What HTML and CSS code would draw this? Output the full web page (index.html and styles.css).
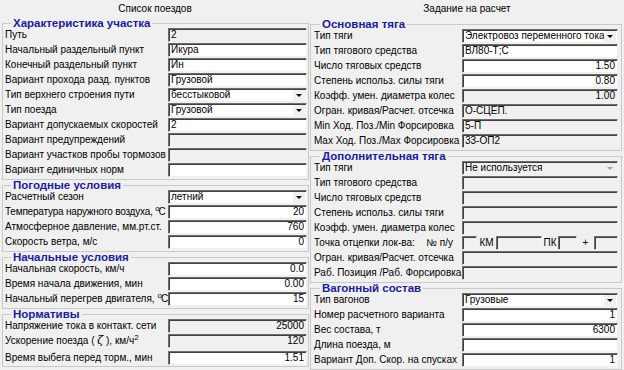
FILE: index.html
```html
<!DOCTYPE html>
<html lang="ru">
<head>
    <meta charset="UTF-8">
    <title>Список поездов - Задание на расчет</title>
    <link rel="stylesheet" href="styles.css">
</head>
<body>
<div class="app">
    <section class="panel panel-left">
        <div class="panel-head">Список поездов</div>

        <fieldset class="group">
            <legend>Характеристика участка</legend>
            <div class="row"><span class="lbl">Путь</span><span class="fld ro">2</span></div>
            <div class="row"><span class="lbl">Начальный раздельный пункт</span><span class="fld">Икура</span></div>
            <div class="row"><span class="lbl">Конечный раздельный пункт</span><span class="fld">Ин</span></div>
            <div class="row"><span class="lbl">Вариант прохода разд. пунктов</span><span class="fld">Грузовой</span></div>
            <div class="row"><span class="lbl">Тип верхнего строения пути</span><span class="fld sel">бесстыковой<i class="arrow"></i></span></div>
            <div class="row"><span class="lbl">Тип поезда</span><span class="fld sel">Грузовой<i class="arrow"></i></span></div>
            <div class="row"><span class="lbl">Вариант допускаемых скоростей</span><span class="fld">2</span></div>
            <div class="row"><span class="lbl">Вариант предупреждений</span><span class="fld ro"></span></div>
            <div class="row"><span class="lbl">Вариант участков пробы тормозов</span><span class="fld ro"></span></div>
            <div class="row"><span class="lbl">Вариант единичных норм</span><span class="fld"></span></div>
        </fieldset>

        <fieldset class="group">
            <legend>Погодные условия</legend>
            <div class="row"><span class="lbl">Расчетный сезон</span><span class="fld sel">летний<i class="arrow"></i></span></div>
            <div class="row"><span class="lbl tight">Температура наружного воздуха, <sup>o</sup>C</span><span class="fld num">20</span></div>
            <div class="row"><span class="lbl">Атмосферное давление, мм.рт.ст.</span><span class="fld num">760</span></div>
            <div class="row"><span class="lbl">Скорость ветра, м/с</span><span class="fld num">0</span></div>
        </fieldset>

        <fieldset class="group">
            <legend>Начальные условия</legend>
            <div class="row"><span class="lbl">Начальная скорость, км/ч</span><span class="fld num">0.0</span></div>
            <div class="row"><span class="lbl">Время начала движения, мин</span><span class="fld num">0.00</span></div>
            <div class="row"><span class="lbl">Начальный перегрев двигателя, <sup>o</sup>C</span><span class="fld num">15</span></div>
        </fieldset>

        <fieldset class="group">
            <legend>Нормативы</legend>
            <div class="row"><span class="lbl">Напряжение тока в контакт. сети</span><span class="fld num ro">25000</span></div>
            <div class="row"><span class="lbl">Ускорение поезда ( <span class="zeta">ζ</span> ), км/ч<sup>2</sup></span><span class="fld num ro">120</span></div>
            <div class="row row-last"><span class="lbl">Время выбега перед торм., мин</span><span class="fld num">1.51</span></div>
        </fieldset>
    </section>

    <section class="panel panel-right">
        <div class="panel-head">Задание на расчет</div>

        <fieldset class="group">
            <legend>Основная тяга</legend>
            <div class="row"><span class="lbl">Тип тяги</span><span class="fld sel">Электровоз переменного тока<i class="arrow"></i></span></div>
            <div class="row"><span class="lbl">Тип тягового средства</span><span class="fld">ВЛ80-Т;С</span></div>
            <div class="row"><span class="lbl">Число тяговых средств</span><span class="fld num">1.50</span></div>
            <div class="row"><span class="lbl">Степень использ. силы тяги</span><span class="fld num">0.80</span></div>
            <div class="row"><span class="lbl">Коэфф. умен. диаметра колес</span><span class="fld num ro">1.00</span></div>
            <div class="row"><span class="lbl">Огран. кривая/Расчет. отсечка</span><span class="fld ro">О-СЦЕП.</span></div>
            <div class="row"><span class="lbl">Min Ход. Поз./Min Форсировка</span><span class="fld ro">5-П</span></div>
            <div class="row"><span class="lbl">Max Ход. Поз./Max Форсировка</span><span class="fld ro">33-ОП2</span></div>
        </fieldset>

        <fieldset class="group">
            <legend>Дополнительная тяга</legend>
            <div class="row"><span class="lbl">Тип тяги</span><span class="fld sel ro">Не используется<i class="arrow off"></i></span></div>
            <div class="row"><span class="lbl">Тип тягового средства</span><span class="fld ro"></span></div>
            <div class="row"><span class="lbl">Число тяговых средств</span><span class="fld ro"></span></div>
            <div class="row"><span class="lbl">Степень использ. силы тяги</span><span class="fld ro"></span></div>
            <div class="row"><span class="lbl">Коэфф. умен. диаметра колес</span><span class="fld ro"></span></div>
            <div class="row">
                <span class="lbl lbl-split"><span>Точка отцепки лок-ва:</span><span>№ п/у</span></span>
                <span class="point">
                    <span class="fld ro w-pu"></span>
                    <span class="unit w-u1">КМ</span>
                    <span class="fld ro w-km"></span>
                    <span class="unit w-u2">ПК</span>
                    <span class="fld ro w-pk"></span>
                    <span class="unit w-u3">+</span>
                    <span class="fld ro w-m"></span>
                </span>
            </div>
            <div class="row"><span class="lbl">Огран. кривая/Расчет. отсечка</span><span class="fld ro"></span></div>
            <div class="row"><span class="lbl">Раб. Позиция /Раб. Форсировка</span><span class="fld ro"></span></div>
        </fieldset>

        <fieldset class="group">
            <legend>Вагонный состав</legend>
            <div class="row"><span class="lbl">Тип вагонов</span><span class="fld sel">Грузовые<i class="arrow"></i></span></div>
            <div class="row"><span class="lbl">Номер расчетного варианта</span><span class="fld num">1</span></div>
            <div class="row"><span class="lbl">Вес состава, т</span><span class="fld num">6300</span></div>
            <div class="row"><span class="lbl">Длина поезда, м</span><span class="fld num"></span></div>
            <div class="row"><span class="lbl">Вариант Доп. Скор. на спусках</span><span class="fld num">1</span></div>
        </fieldset>
    </section>
</div>
</body>
</html>
```

FILE: styles.css
```css
* {
    margin: 0;
    padding: 0;
    box-sizing: border-box;
}
body {
    background: #f0f0f0;
    font-family: "Liberation Sans", Arial, sans-serif;
    font-size: 10px;
    color: #000;
    width: 624px;
    height: 370px;
    overflow: hidden;
}
.app {
    display: flex;
    height: 370px;
}
.panel {
    display: flex;
    flex-direction: column;
}
.panel-left {
    width: 310px;
    --lbl: 163px;
}
.panel-right {
    width: 314px;
    --lbl: 148px;
}
.panel-head {
    height: 18px;
    line-height: 18px;
    text-align: center;
}
.panel-right .panel-head {
    height: 19px;
}

/* group boxes */
.group {
    border: 1px solid #c9c9c9;
    margin: 0 1px 0 2px;
    padding: 0 1px 1px 2px;
    min-width: 0;
}
.panel-right .group {
    margin: 0 2px 0 0;
    padding: 0 3px 1px 3px;
}
.group legend {
    color: #1b1ba6;
    font-weight: bold;
    font-size: 11.5px;
    line-height: 10px;
    padding: 0 2px;
    margin-left: 6px;
}

/* rows */
.row {
    display: grid;
    grid-template-columns: var(--lbl) 1fr;
    height: 15px;
    align-items: start;
}
.row-last {
    height: 16px;
    align-items: end;
}
.lbl {
    line-height: 14px;
    white-space: nowrap;
}
.lbl.tight {
    letter-spacing: -0.2px;
}
.lbl sup {
    font-size: 8px;
    line-height: 0;
    vertical-align: 4px;
    margin-right: -1px;
}
.zeta {
    font-family: "DejaVu Serif", serif;
    font-style: italic;
    font-size: 11px;
}
.lbl-split {
    display: flex;
    justify-content: space-between;
    padding-right: 9px;
}

/* fields */
.fld {
    position: relative;
    display: block;
    height: 14px;
    line-height: 12px;
    padding: 0 2px;
    background: #fff;
    border: 1px solid;
    border-color: #6d6d6d #f0f0f0 #f0f0f0 #6d6d6d;
    box-shadow: inset 1px 1px 0 #404040;
    white-space: nowrap;
    overflow: hidden;
}
.fld.ro {
    background: #f0f0f0;
}
.fld.num {
    text-align: right;
}
.fld.sel {
    padding-right: 16px;
}
.arrow {
    position: absolute;
    right: 1px;
    top: 1px;
    width: 12px;
    height: 11px;
    background: #f0f0f0;
}
.arrow::after {
    content: "";
    position: absolute;
    left: 3px;
    top: 4px;
    border-left: 3px solid transparent;
    border-right: 3px solid transparent;
    border-top: 3px solid #000;
}
.arrow.off::after {
    border-top-color: #a0a0a0;
}

/* point row */
.point {
    display: flex;
    align-items: start;
}
.unit {
    line-height: 14px;
    text-align: center;
    flex: none;
}
.w-pu { width: 15px; flex: none; }
.w-u1 { width: 19px; }
.w-km { width: 46px; flex: none; }
.w-u2 { width: 16px; }
.w-pk { width: 19px; flex: none; }
.w-u3 { width: 17px; }
.w-m { flex: 1; }
```
